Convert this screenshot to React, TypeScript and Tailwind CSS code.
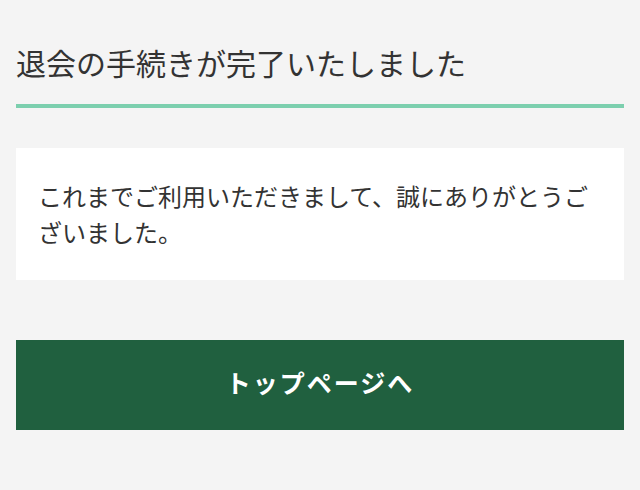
export default function App() {
  return (
    <div className="min-h-screen bg-[#f4f4f4] px-4 pt-[40px] pb-10 font-['Noto_Sans_CJK_JP','Noto_Sans',sans-serif] text-[#333333]">
      <h1 className="border-b-4 border-[#7ccfae] pb-[19px] text-[30px] leading-[45px] font-normal">
        退会の手続きが完了いたしました
      </h1>

      <section className="mt-10 bg-white px-[22px] py-[30px]">
        <p className="text-[24px] leading-9">
          これまでご利用いただきまして、誠にありがとうございました。
        </p>
      </section>

      <a
        href="#"
        className="mt-[60px] flex h-[90px] items-center justify-center bg-[#20603f] pb-1 text-[25px] font-bold tracking-[2px] text-white"
      >
        トップページへ
      </a>
    </div>
  );
}
